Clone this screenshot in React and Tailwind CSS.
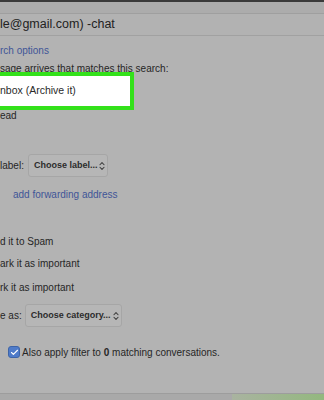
import { ChevronsUpDown, Check } from "lucide-react";

function Select({ label, width }) {
  return (
    <div
      className={`flex h-[23px] ${width} items-center justify-between rounded-[3px] border border-[#a6a6a6] bg-[#b6b6b6] pl-[5px] pr-[4px]`}
    >
      <span className="whitespace-nowrap text-[9px] font-bold text-[#2c2c2c]">{label}</span>
      <ChevronsUpDown className="h-[10px] w-[10px] shrink-0 text-[#3a3a3a]" strokeWidth={2.5} />
    </div>
  );
}

export default function App() {
  return (
    <div
      className="relative h-[400px] w-[324px] overflow-hidden bg-[#b3b3b3] text-[10px] text-[#262626]"
      style={{ fontFamily: '"Liberation Sans", Arial, sans-serif' }}
    >
      {/* top bars */}
      <div className="h-[2px] bg-[#3a3a3a]" />
      <div className="h-[11px] bg-[#acacac]" />
      <div className="h-px bg-[#9f9f9f]" />
      <div className="flex h-[21px] items-center bg-[#b2b2b2] text-[12.5px] text-[#222]">
        le@gmail.com) -chat
      </div>
      <div className="h-px bg-[#a1a1a1]" />

      {/* body */}
      <div className="mt-[4px] flex h-[20px] items-center text-[#3f5597]">rch options</div>
      <div className="flex h-[16px] items-center whitespace-nowrap">
        sage arrives that matches this search:
      </div>
      <div className="mt-[29px] flex h-[20px] items-center">ead</div>

      <div className="mt-[29px] flex items-center gap-[4px]">
        <span>label:</span>
        <Select label="Choose label..." width="w-[80px]" />
      </div>

      <div className="mt-[7px] flex h-[20px] items-center pl-[13px] text-[#3f5597]">
        add forwarding address
      </div>

      <div className="mt-[27px] flex h-[20px] items-center">d it to Spam</div>
      <div className="mt-[2px] flex h-[20px] items-center">ark it as important</div>
      <div className="mt-[4px] flex h-[20px] items-center">rk it as important</div>

      <div className="mt-[7px] flex items-center gap-[3px]">
        <span>e as:</span>
        <Select label="Choose category..." width="w-[97px]" />
      </div>

      <div className="mt-[15px] flex h-[20px] items-center gap-[2px] pl-[8px]">
        <div className="flex h-[12px] w-[12px] items-center justify-center rounded-[3px] border border-[#3d64a8] bg-[#4f7bc9]">
          <Check className="h-[9px] w-[9px] text-white" strokeWidth={3} />
        </div>
        <span>
          Also apply filter to <b>0</b> matching conversations.
        </span>
      </div>

      {/* bottom edge */}
      <div className="mt-[31px] h-px bg-[#9d9d9d]" />
      <div className="flex h-[6px]">
        <div className="w-[232px] bg-[#a9a9a9]" />
        <div className="flex-1 bg-gradient-to-r from-[#a9b3a0] to-[#93b87e]" />
      </div>

      {/* highlight box */}
      <div className="absolute left-[-4px] top-[72px] flex h-[38px] w-[138px] items-center border-[4px] border-[#33e11a] bg-white">
        <span className="text-[10.5px] text-[#2a2a2a]">nbox (Archive it)</span>
      </div>
    </div>
  );
}
